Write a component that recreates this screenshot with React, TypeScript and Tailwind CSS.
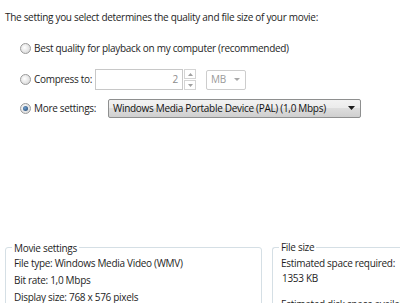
import React from "react";

function Radio({ checked }: { checked?: boolean }) {
  return (
    <span className="relative inline-block w-[11px] h-[11px] rounded-full border border-[#9a9a9a] bg-[radial-gradient(circle_at_40%_40%,#ffffff,#d0d0d0)] shrink-0">
      {checked && (
        <span className="absolute left-[2px] top-[2px] w-[5px] h-[5px] rounded-full bg-[radial-gradient(circle_at_40%_40%,#6fa0d0,#1e3f66)]" />
      )}
    </span>
  );
}

export default function App() {
  return (
    <div
      className="w-[400px] h-[303px] bg-white text-[#1e1e1e] text-[10px] tracking-[-0.3px] overflow-hidden whitespace-nowrap"
      style={{ fontFamily: '"Open Sans", "Noto Sans", sans-serif' }}
    >
      <div className="pl-[5px] pt-[10px] leading-[15px]">
        The setting you select determines the quality and file size of your movie:
      </div>
      <div className="pl-[20px] mt-[16px] flex items-center gap-[3px] leading-[15px]">
        <Radio />
        <span>Best quality for playback on my computer (recommended)</span>
      </div>
      <div className="pl-[20px] mt-[13px] flex items-center h-[21px]">
        <Radio />
        <span className="ml-[3px] w-[61px] shrink-0">Compress to:</span>
        <div className="w-[88px] h-[21px] border border-[#c8c8c8] text-right pr-[4px] text-[#8c8c8c] leading-[19px] shrink-0">2</div>
        <div className="ml-[1px] w-[12px] h-[21px] flex flex-col gap-[1px] shrink-0">
          <div className="flex-1 border border-[#d4d4d4] flex items-center justify-center">
            <svg width="5" height="3" viewBox="0 0 5 3"><path d="M0 3L2.5 0L5 3Z" fill="#a0a0a0" /></svg>
          </div>
          <div className="flex-1 border border-[#d4d4d4] flex items-center justify-center">
            <svg width="5" height="3" viewBox="0 0 5 3"><path d="M0 0L2.5 3L5 0Z" fill="#a0a0a0" /></svg>
          </div>
        </div>
        <div className="ml-[10px] w-[40px] h-[20px] border border-[#cdcdcd] rounded-[2px] flex items-center justify-between pl-[4px] pr-[5px] text-[#9a9a9a] shrink-0">
          <span>MB</span>
          <svg width="6" height="3" viewBox="0 0 6 3"><path d="M0 0L3 3L6 0Z" fill="#a8a8a8" /></svg>
        </div>
      </div>
      <div className="pl-[20px] mt-[8px] flex items-center h-[20px]">
        <Radio checked />
        <span className="ml-[3px] w-[74px] shrink-0">More settings:</span>
        <div className="w-[253px] h-[19px] border border-[#8e8f8f] rounded-[2px] bg-[linear-gradient(#f2f2f2,#ebebeb_50%,#dddddd_50%,#cfcfcf)] flex items-center justify-between pl-[4px] pr-[5px] text-[#111] shrink-0">
          <span>Windows Media Portable Device (PAL) (1,0 Mbps)</span>
          <svg width="7" height="4" viewBox="0 0 7 4"><path d="M0 0L3.5 4L7 0Z" fill="#1a1a1a" /></svg>
        </div>
      </div>
      <div className="mt-[129px] flex pl-[5px] gap-[10px]">
        <div className="relative w-[257px] h-[80px] border border-[#d5dfe5] rounded-[3px] pt-[7px] pl-[8px] leading-[17px] shrink-0">
          <span className="absolute -top-[8px] left-[6px] bg-white px-[2px]">Movie settings</span>
          <div>File type: Windows Media Video (WMV)</div>
          <div>Bit rate: 1,0 Mbps</div>
          <div>Display size: 768 x 576 pixels</div>
        </div>
        <div className="relative w-[140px] h-[80px] border border-[#d5dfe5] border-r-0 rounded-l-[3px] pt-[8px] pl-[8px] leading-[15px] shrink-0">
          <span className="absolute -top-[8px] left-[6px] bg-white px-[2px]">File size</span>
          <div>Estimated space required:</div>
          <div className="pl-[1px]">1353 KB</div>
          <div className="mt-[11px]">Estimated disk space available:</div>
        </div>
      </div>
    </div>
  );
}
